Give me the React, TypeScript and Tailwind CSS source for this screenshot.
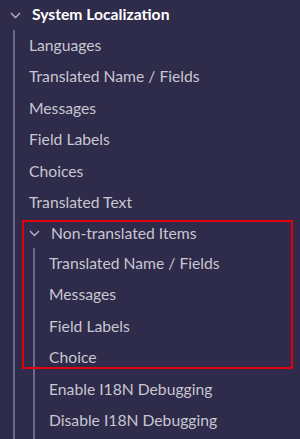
import React from "react"

const items = [
  "Languages",
  "Translated Name / Fields",
  "Messages",
  "Field Labels",
  "Choices",
  "Translated Text",
]

const subItems = [
  "Translated Name / Fields",
  "Messages",
  "Field Labels",
  "Choice",
  "Enable I18N Debugging",
  "Disable I18N Debugging",
]

function Chevron() {
  return (
    <svg width="11" height="7" viewBox="0 0 11 7" fill="none" className="shrink-0">
      <path d="M1 1l4.5 4.5L10 1" stroke="#b9b7c8" strokeWidth="1.3" />
    </svg>
  )
}

export default function App() {
  return (
    <div className="relative w-[300px] h-[439px] overflow-hidden bg-[#2f2b4a] font-['Lato',sans-serif] text-[15.7px]">
      <div className="h-[30px] flex items-center pl-[10px] gap-x-[11px]">
        <Chevron />
        <span className="font-bold text-white">System Localization</span>
      </div>
      <div className="ml-[13px] border-l-2 border-[#6c6888] pl-[14px] pb-[20px]">
        {items.map((name) => (
          <div key={name} className="h-[31.5px] flex items-center text-[#c8c7d2]">
            {name}
          </div>
        ))}
        <div className="h-[29px] flex items-center gap-x-[11px] text-[#c8c7d2]">
          <Chevron />
          <span>Non-translated Items</span>
        </div>
        <div className="ml-[4px] border-l-2 border-[#6c6888] pl-[14px] pb-[20px]">
          {subItems.map((name, i) => (
            <div key={i} className="h-[31.5px] flex items-center text-[#c8c7d2]">
              {name}
            </div>
          ))}
        </div>
      </div>
      <div className="absolute top-[220px] left-[22px] w-[271px] h-[149px] border-2 border-[#e3000e]" />
    </div>
  )
}
